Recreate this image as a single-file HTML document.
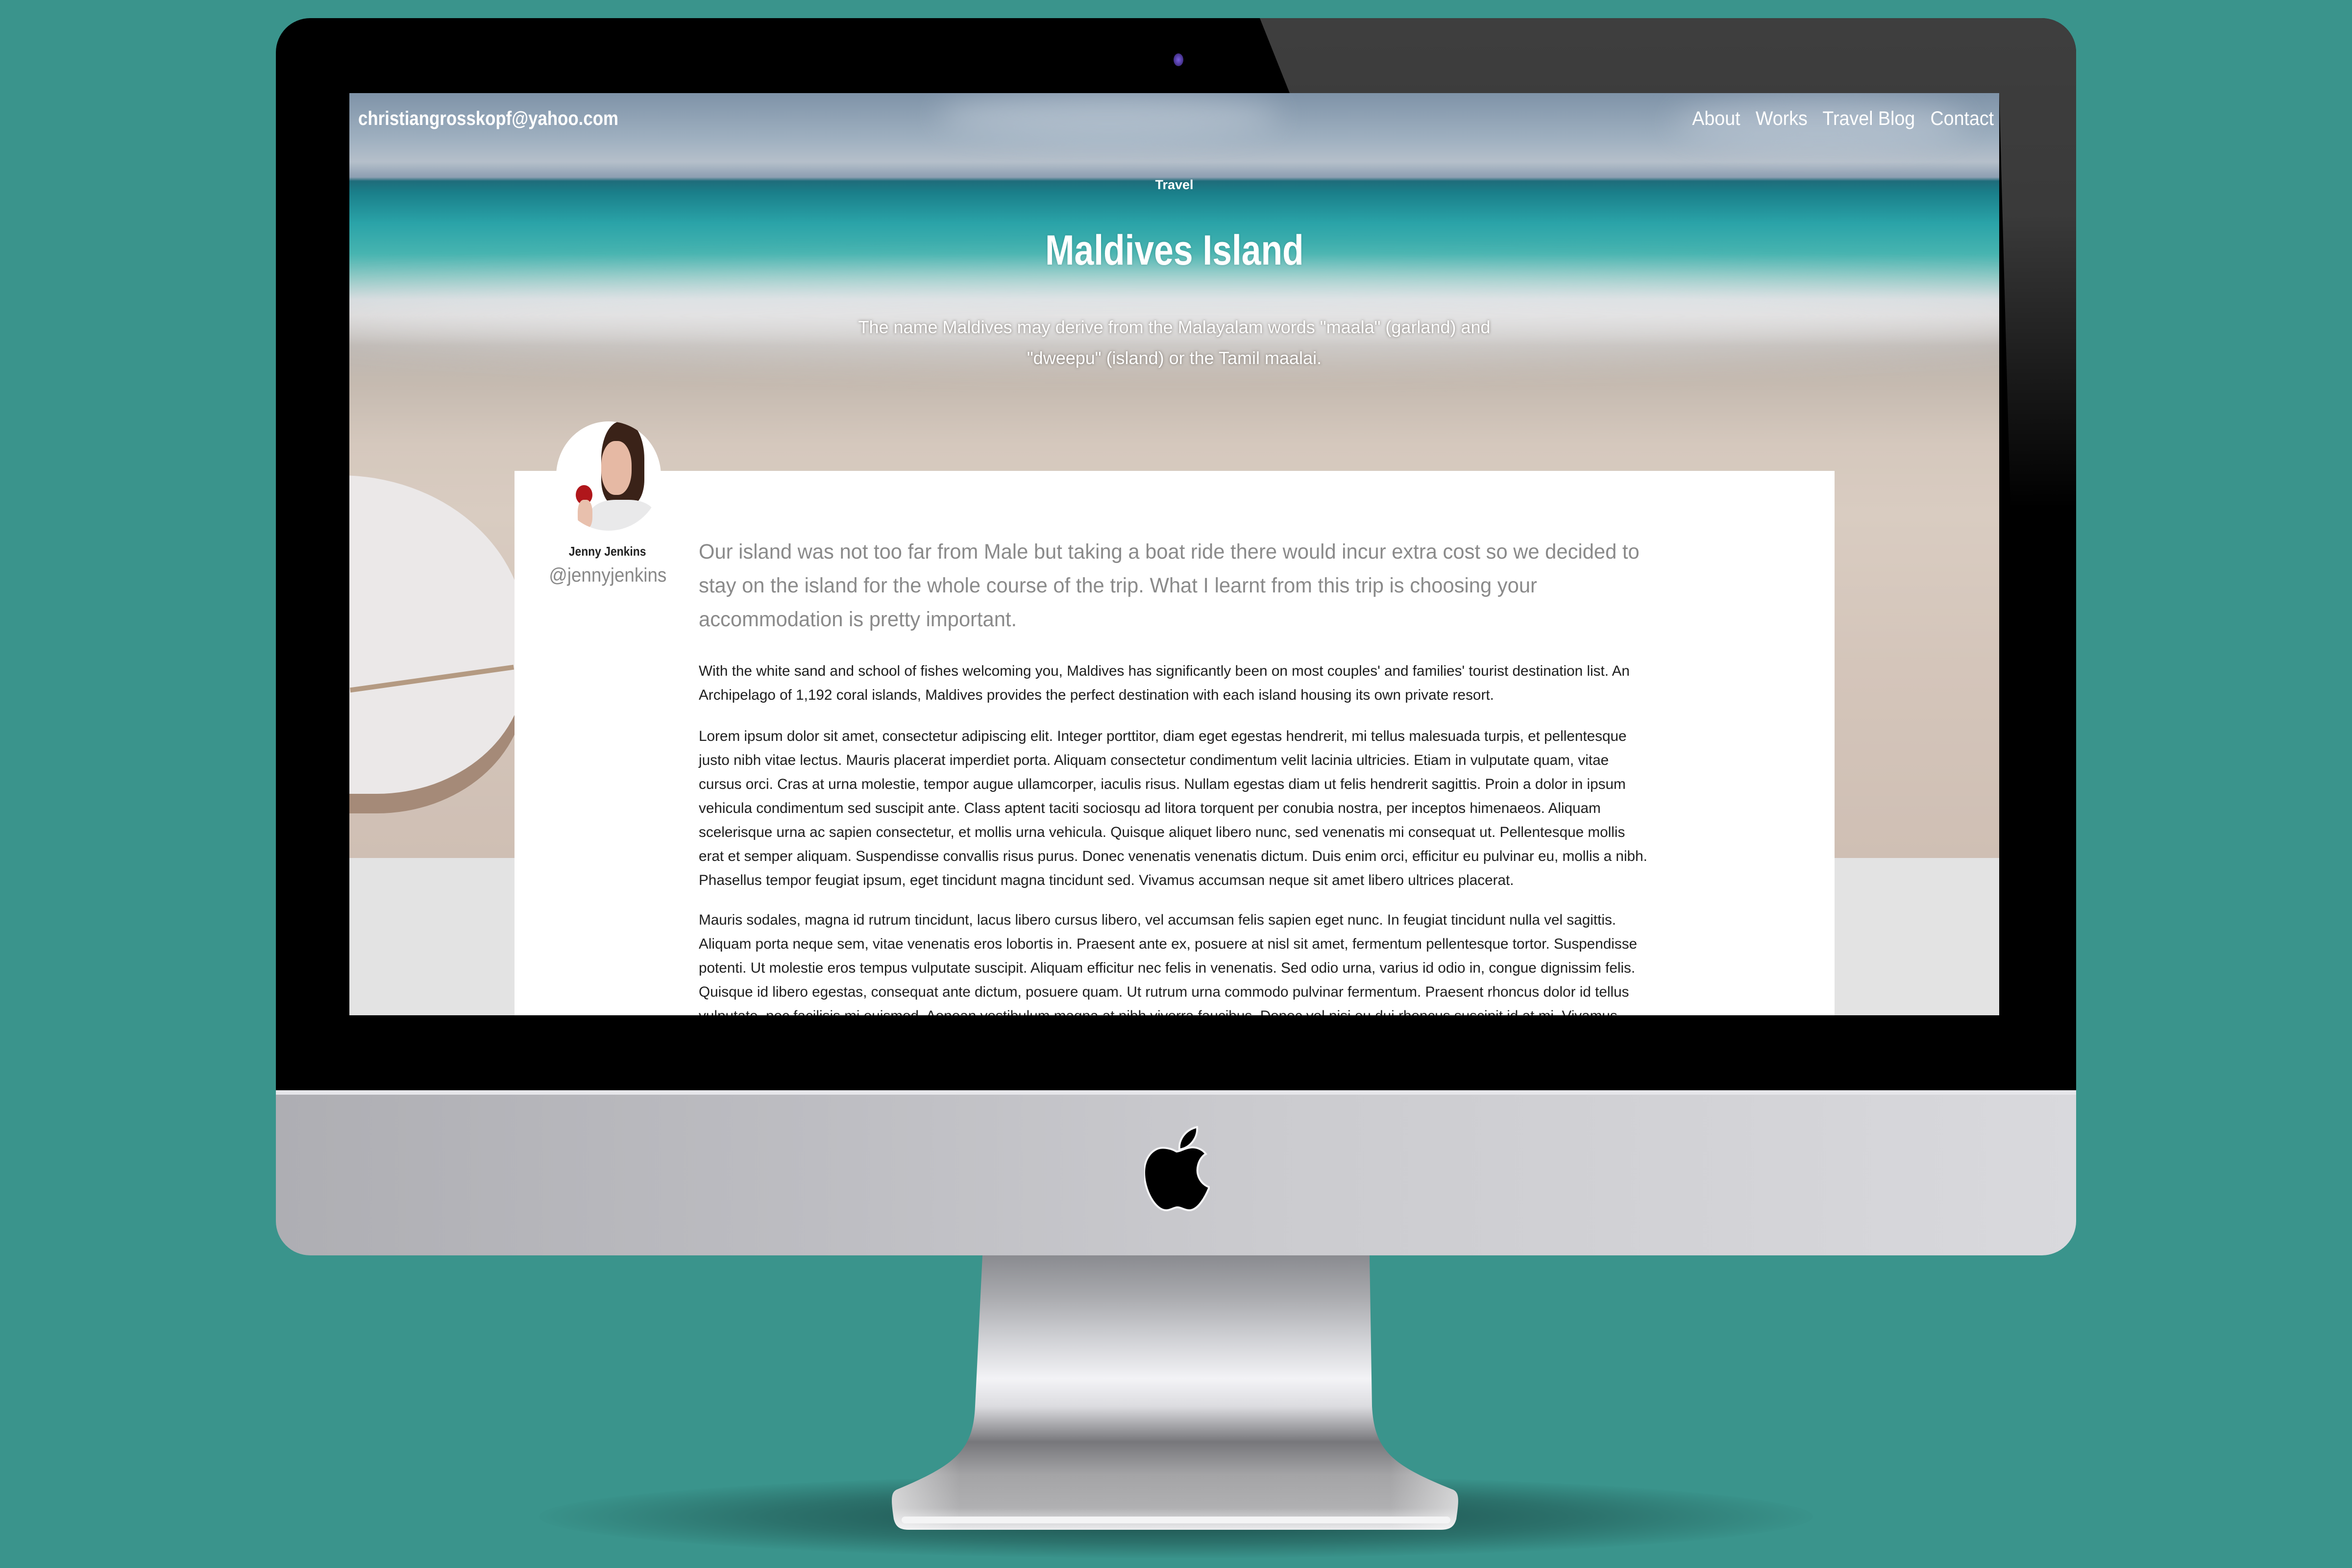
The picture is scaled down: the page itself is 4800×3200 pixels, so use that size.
<!DOCTYPE html>
<html><head><meta charset="utf-8"><style>
*{margin:0;padding:0;box-sizing:border-box}
html,body{width:4800px;height:3200px;overflow:hidden;background:#3a948c;font-family:"Liberation Sans",sans-serif}
.abs{position:absolute}
.sx{display:inline-block;white-space:nowrap;transform-origin:left top}
</style></head><body>
<div class="abs" style="left:1100px;top:3010px;width:2600px;height:170px;border-radius:50%;background:radial-gradient(ellipse at center,rgba(20,60,58,.85) 0%,rgba(30,80,76,.5) 45%,rgba(58,148,140,0) 72%)"></div>
<svg class="abs" style="left:1800px;top:2540px" width="1200" height="600" viewBox="0 0 1200 600">
<defs><linearGradient id="st" x1="0" y1="0" x2="0" y2="1">
<stop offset="0" stop-color="#8a8b90"/><stop offset="0.15" stop-color="#a9aaae"/><stop offset="0.3" stop-color="#cfd0d4"/><stop offset="0.45" stop-color="#f3f3f6"/><stop offset="0.55" stop-color="#dcdce0"/><stop offset="0.68" stop-color="#77777b"/><stop offset="0.8" stop-color="#a4a4a6"/><stop offset="0.92" stop-color="#b0b0b2"/><stop offset="1" stop-color="#ececee"/></linearGradient>
<linearGradient id="sh" x1="0" y1="0" x2="1" y2="0"><stop offset="0" stop-color="#fff" stop-opacity=".5"/><stop offset=".12" stop-color="#fff" stop-opacity="0"/><stop offset=".88" stop-color="#fff" stop-opacity="0"/><stop offset="1" stop-color="#fff" stop-opacity=".5"/></linearGradient></defs>
<path d="M205 22 L995 22 L1000 330 C1005 420 1040 450 1165 500 C1178 506 1178 520 1172 560 C1168 575 1160 582 1140 582 L55 582 C35 582 28 575 24 560 C18 520 18 506 30 500 C150 450 186 420 190 330 Z" fill="url(#st)"/>
<path d="M205 22 L995 22 L1000 330 C1005 420 1040 450 1165 500 C1178 506 1178 520 1172 560 C1168 575 1160 582 1140 582 L55 582 C35 582 28 575 24 560 C18 520 18 506 30 500 C150 450 186 420 190 330 Z" fill="url(#sh)"/>
<rect x="40" y="555" width="1120" height="14" rx="7" fill="#f4f4f5"/>
</svg>
<div class="abs" style="left:563px;top:2222px;width:3674px;height:340px;border-radius:0 0 70px 70px;background:linear-gradient(90deg,#aeaeb3,#bdbdc2 30%,#cbcbcf 55%,#d9d9dd 100%)"></div>
<div class="abs" style="left:563px;top:2222px;width:3674px;height:12px;background:#e6e6ea"></div>
<svg class="abs" style="left:2335px;top:2298px" width="134" height="176" viewBox="0 0 134 176">
<path d="M66 52 C56 46 40 42 28 46 C8 54 0 75 0 95 C0 130 22 172 45 172 C55 172 60 166 68 166 C76 166 82 172 92 172 C110 172 125 145 133 125 C115 118 105 100 110 80 C113 68 120 60 126 57 C118 46 104 42 93 44 C80 46 74 52 66 52 Z" fill="#000" stroke="#f4f4f6" stroke-width="4"/>
<path d="M72 48 C70 30 82 8 108 2 C110 22 96 44 72 48 Z" fill="#000" stroke="#f4f4f6" stroke-width="4"/>
</svg>
<div class="abs" style="left:563px;top:37px;width:3674px;height:2188px;border-radius:70px 70px 0 0;background:#000;overflow:hidden">
<div class="abs" style="left:0;top:0;width:3674px;height:1000px;background:linear-gradient(180deg,#3e3e3e 0%,#3a3a3a 40%,#000 100%);clip-path:polygon(2008px 0,3674px 0,3674px 1000px,3540px 1000px,3517px 153px,2069px 153px)"></div>
<div class="abs" style="left:1832px;top:72px;width:20px;height:26px;border-radius:50%;background:radial-gradient(#7a5fe0,#2a1a60)"></div>
</div>
<div class="abs" style="left:713px;top:190px;width:3367px;height:1882px;overflow:hidden;background:#e3e3e3">
 <div class="abs" style="left:0;top:0;width:3367px;height:1561px;background:linear-gradient(180deg,#7f93a8 0%,#9fb0c0 6%,#b5bfca 9%,#8d9fb2 11%,#1f6c7a 11.5%,#1a7f8a 13%,#2aa3a8 17%,#47b4b0 21%,#8cc8c4 24%,#d2d8db 27%,#d8d6d6 29%,#bdb7b2 33%,#c5bab0 38%,#d5c8bd 46%,#d9ccc1 55%,#d4c5ba 75%,#cfbfb4 100%)"></div>
 <div class="abs" style="left:1200px;top:0;width:700px;height:90px;border-radius:50%;background:rgba(235,240,245,.35);filter:blur(30px)"></div>
 <div class="abs" style="left:2700px;top:10px;width:600px;height:100px;border-radius:50%;background:rgba(235,240,245,.3);filter:blur(30px)"></div>
 <div class="abs" style="left:-100px;top:380px;width:3600px;height:150px;border-radius:50%;background:rgba(240,242,244,.5);filter:blur(40px)"></div>
 <div class="abs" style="left:0;top:770px;width:337px;height:791px;overflow:hidden">
  <div class="abs" style="left:-400px;top:10px;width:760px;height:650px;border-radius:50% 50% 40% 40%;background:#ebe8e8;box-shadow:0 40px 0 #a58a78"></div>
  <div class="abs" style="left:0;top:420px;width:337px;height:10px;background:#b49a82;transform:rotate(-8deg)"></div>
 </div>
 <div class="abs" style="left:18px;top:30px;color:#fff;font-size:40px;font-weight:bold"><span class="sx" style="transform:scaleX(.87)">christiangrosskopf@yahoo.com</span></div>
 <div class="abs" style="left:2556px;top:30px;color:#fff;font-size:40px;width:800px;text-align:right"><span class="sx" style="transform:scaleX(.94);transform-origin:right top">About&nbsp;&nbsp; Works&nbsp;&nbsp; Travel Blog&nbsp;&nbsp; Contact</span></div>
 <div class="abs" style="left:0;top:172px;width:3367px;text-align:center;color:#fff;font-size:27px;font-weight:bold">Travel</div>
 <div class="abs" style="left:0;top:272px;width:3367px;text-align:center;color:#fff;font-size:86px;font-weight:bold;text-shadow:0 0 6px rgba(0,0,0,.15)"><span style="display:inline-block;transform:scaleX(.83)">Maldives Island</span></div>
 <div class="abs" style="left:0;top:446px;width:3367px;text-align:center;color:#fff;font-size:36px;line-height:63px;text-shadow:0 0 6px rgba(60,50,40,.6)"><span style="display:inline-block;transform:scaleX(1.0)">The name Maldives may derive from the Malayalam words "maala" (garland) and<br>"dweepu" (island) or the Tamil maalai.</span></div>
 <div class="abs" style="left:337px;top:771px;width:2694px;height:1200px;background:#fff"></div>
 <div class="abs" style="left:422px;top:670px;width:214px;height:223px;border-radius:50%;background:#fff;overflow:hidden">
  <div class="abs" style="left:92px;top:0;width:88px;height:170px;border-radius:45% 45% 30% 30%;background:#3a2218"></div>
  <div class="abs" style="left:92px;top:40px;width:62px;height:110px;border-radius:45%;background:#e6b9a4"></div>
  <div class="abs" style="left:70px;top:160px;width:130px;height:70px;border-radius:40% 40% 0 0;background:#e9e9ea"></div>
  <div class="abs" style="left:40px;top:130px;width:34px;height:40px;border-radius:50%;background:#b0161b"></div>
  <div class="abs" style="left:44px;top:160px;width:30px;height:60px;border-radius:40%;background:#e8c0ad"></div>
 </div>
 <div class="abs" style="left:337px;top:920px;width:380px;text-align:center;font-size:26px;font-weight:bold;color:#222"><span style="display:inline-block;transform:scaleX(.88)">Jenny Jenkins</span></div>
 <div class="abs" style="left:337px;top:962px;width:380px;text-align:center;font-size:40px;color:#888"><span style="display:inline-block;transform:scaleX(.92)">@jennyjenkins</span></div>
 <div class="abs" style="left:713px;top:902px;color:#8a8a8a;font-size:43px;line-height:69px"><span class="sx" style="transform:scaleX(.97)">Our island was not too far from Male but taking a boat ride there would incur extra cost so we decided to<br>stay on the island for the whole course of the trip. What I learnt from this trip is choosing your<br>accommodation is pretty important.</span></div>
 <div class="abs" style="left:713px;top:1155px;color:#1e1e1e;font-size:30px;line-height:49px"><span class="sx" style="transform:scaleX(.99)">With the white sand and school of fishes welcoming you, Maldives has significantly been on most couples' and families' tourist destination list. An<br>Archipelago of 1,192 coral islands, Maldives provides the perfect destination with each island housing its own private resort.</span></div>
 <div class="abs" style="left:713px;top:1288px;color:#1e1e1e;font-size:30px;line-height:49px"><span class="sx" style="transform:scaleX(.99)">Lorem ipsum dolor sit amet, consectetur adipiscing elit. Integer porttitor, diam eget egestas hendrerit, mi tellus malesuada turpis, et pellentesque<br>justo nibh vitae lectus. Mauris placerat imperdiet porta. Aliquam consectetur condimentum velit lacinia ultricies. Etiam in vulputate quam, vitae<br>cursus orci. Cras at urna molestie, tempor augue ullamcorper, iaculis risus. Nullam egestas diam ut felis hendrerit sagittis. Proin a dolor in ipsum<br>vehicula condimentum sed suscipit ante. Class aptent taciti sociosqu ad litora torquent per conubia nostra, per inceptos himenaeos. Aliquam<br>scelerisque urna ac sapien consectetur, et mollis urna vehicula. Quisque aliquet libero nunc, sed venenatis mi consequat ut. Pellentesque mollis<br>erat et semper aliquam. Suspendisse convallis risus purus. Donec venenatis venenatis dictum. Duis enim orci, efficitur eu pulvinar eu, mollis a nibh.<br>Phasellus tempor feugiat ipsum, eget tincidunt magna tincidunt sed. Vivamus accumsan neque sit amet libero ultrices placerat.</span></div>
 <div class="abs" style="left:713px;top:1663px;color:#1e1e1e;font-size:30px;line-height:49px"><span class="sx" style="transform:scaleX(.99)">Mauris sodales, magna id rutrum tincidunt, lacus libero cursus libero, vel accumsan felis sapien eget nunc. In feugiat tincidunt nulla vel sagittis.<br>Aliquam porta neque sem, vitae venenatis eros lobortis in. Praesent ante ex, posuere at nisl sit amet, fermentum pellentesque tortor. Suspendisse<br>potenti. Ut molestie eros tempus vulputate suscipit. Aliquam efficitur nec felis in venenatis. Sed odio urna, varius id odio in, congue dignissim felis.<br>Quisque id libero egestas, consequat ante dictum, posuere quam. Ut rutrum urna commodo pulvinar fermentum. Praesent rhoncus dolor id tellus<br>vulputate, nec facilisis mi euismod. Aenean vestibulum magna at nibh viverra faucibus. Donec vel nisi eu dui rhoncus suscipit id at mi. Vivamus</span></div>
</div>
</body></html>
